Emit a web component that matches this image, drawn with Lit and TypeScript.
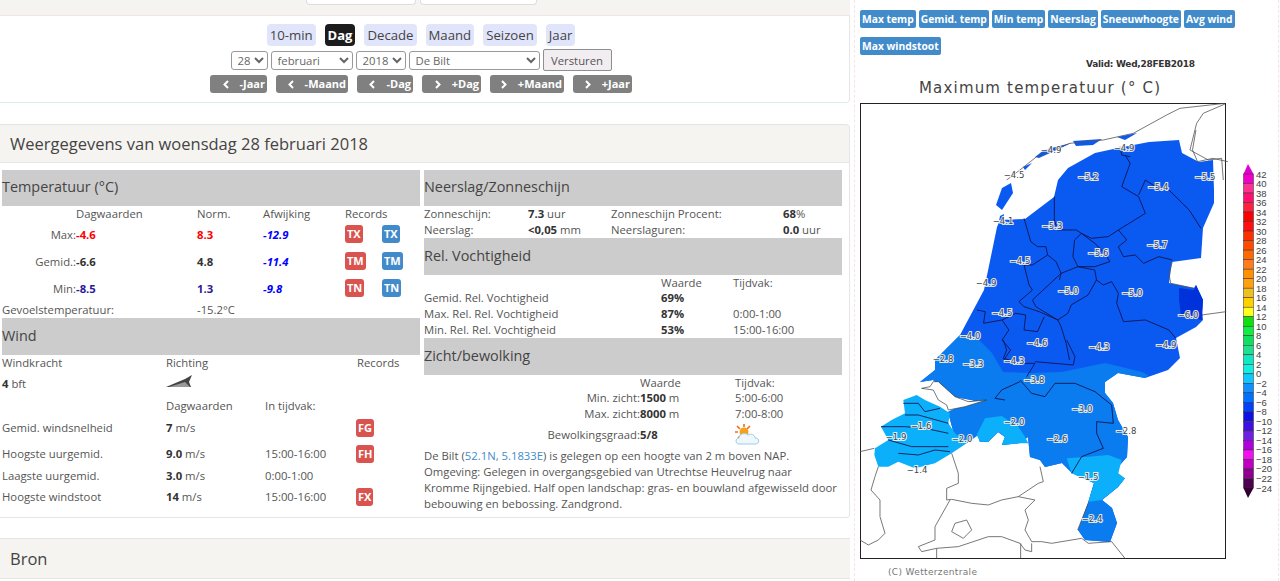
import { LitElement, html, css, svg } from "lit";
import { customElement } from "lit/decorators.js";

const Z8 = "translate(960 130) scale(0.337 0.3333)";
const Z9 = "translate(855 340) scale(0.3333)";
const Z7 = "translate(850 0) scale(0.3333)";

const LABELS: [string, number, number][] = [
  ["−4.9", 1051, 150], ["−4.9", 1124, 148], ["−4.5", 1014, 175], ["−5.2", 1088, 177], ["−5.4", 1158, 187],
  ["−5.5", 1205, 177], ["−4.1", 1003, 221], ["−5.3", 1052, 226], ["−5.7", 1157, 245], ["−5.6", 1098, 253],
  ["−4.5", 1020, 261], ["−4.9", 986, 283], ["−5.0", 1068, 291], ["−5.0", 1132, 293], ["−4.5", 1002, 313],
  ["−6.0", 1188, 315], ["−4.0", 970, 336], ["−4.6", 1037, 343], ["−4.3", 1099, 347], ["−4.9", 1166, 345],
  ["−2.8", 943, 359], ["−3.3", 973, 364], ["−4.3", 1014, 361], ["−3.8", 1034, 380], ["−3.0", 1082, 409],
  ["−2.0", 1014, 422], ["−2.8", 1126, 431], ["−1.6", 921, 426], ["−1.9", 896, 437], ["−2.0", 962, 439],
  ["−2.6", 1057, 439], ["−1.5", 1088, 477], ["−1.4", 917, 470], ["−2.4", 1092, 519],
];

const BAR = ["#f000c8","#ff3090","#ff1070","#ff2040","#ff0000","#ff1010","#ff3000","#ff4a00","#ff6a00","#ff7a20","#ff9000","#ffa010","#f0c020","#ffd000","#ffff20","#10e010","#10ee40","#10e060","#20e090","#10e8c0","#10f0e0","#10c8ff","#1090ff","#0070ff","#0040ff","#1010e0","#4010e0","#7020e0","#b000e0","#f010f0","#c000c0","#900090","#500050"];

const MAIN = "1025,219 1054,197 1058,180 1068,168 1095,153 1118,148 1149,142 1179,140 1182,153 1199,162 1213,160 1214,190 1214,203 1203,228 1201,258 1172,262 1169,283 1194,288 1196,285 1203,300 1202,312 1203,320 1196,327 1176,338 1180,358 1168,370 1145,378 1118,373 1105,382 1105,393 1113,403 1118,420 1128,437 1127,457 1118,467 1115,480 1125,478 1118,487 1102,500 1112,508 1117,523 1110,542 1085,540 1078,530 1088,503 1094,483 1072,473 1062,463 1045,467 1040,460 1030,457 1028,437 1020,443 1002,445 1005,437 998,432 988,442 980,442 978,435 967,443 955,438 948,412 968,402 988,398 982,402 955,397 933,380 920,382 935,370 935,360 950,345 960,335 984,290 997,227 1000,220";
const MID = "960,335 977,338 992,353 1003,372 1032,373 1062,372 1105,363 1142,372 1148,375 1145,378 1118,373 1105,382 1105,393 1113,403 1118,420 1128,437 1127,457 1118,467 1115,480 1125,478 1118,487 1102,500 1112,508 1117,523 1110,542 1085,540 1078,530 1088,503 1094,483 1072,473 1062,463 1045,467 1040,460 1030,457 1028,437 1020,443 1002,445 1005,437 998,432 988,442 980,442 978,435 967,443 955,438 948,412 968,402 988,398 982,402 955,397 933,380 920,382 935,370 935,360 950,345";
const LIGHT = [
  "60,325 100,300 78,260 110,240 150,220 145,180 185,165 210,180 255,200 285,220 280,250 300,280 335,310 290,340 240,370 180,385 130,365 100,380 70,380 58,345",
  "365,285 390,235 440,228 490,260 510,290 520,310 495,310 440,315 450,290 430,275 400,305 375,305",
  "635,355 700,350 760,345 800,360 790,400 810,415 790,440 740,480 700,485 718,430 650,400",
];
const ISLANDS = ["1011,183 1013,193 1002,210 996,205 1002,188", "1035,157 1044,150 1071,143 1061,148 1039,158", "1073,141 1102,139 1093,145 1076,146", "1117,137 1137,133 1125,140", "1023,167 1032,163 1025,170", "1000,216 1004,214 1003,221 999,221"];

const LINES_Z8 = [
  "490,75 505,100 480,170 530,200 550,250 510,275 470,300 440,320 390,325 360,310 345,300 290,300 280,270 280,200",
  "530,195 550,150 580,170 620,180 680,240 715,295",
  "470,300 495,330 470,350 485,380 520,375 545,400 590,380 630,390",
  "360,310 340,330 335,380 350,410 400,410 445,395 430,370 400,340 360,310",
  "190,265 210,335 230,350 255,350 260,375 215,405 190,405",
  "260,375 285,395 300,430 295,450",
  "350,410 300,430 215,510 225,530 290,570 320,550 330,525 380,495 405,450 400,420 350,410",
  "405,450 425,465 450,455 470,490 465,520 485,575 550,570 620,600 640,625",
  "190,405 205,465 215,480 175,515 190,530 235,545 290,570 300,590 315,640 325,690",
  "50,540 75,545 70,580 125,570 165,550 195,555 190,600 230,605 250,560",
  "125,570 145,600 125,630 150,660 130,690",
  "475,50 480,75 505,80",
];
const LINES_Z9 = [
  "445,0 455,30 445,55 500,70 540,70 515,110",
  "540,65 655,75 660,50 635,0",
  "495,120 530,160 570,170 600,130 660,130 720,155 770,195 775,250 725,245 725,280 745,325 680,350 650,400",
  "495,125 440,150 420,175 450,180",
  "145,190 190,190 210,215 255,205",
  "150,225 190,225 280,250",
  "78,260 150,260 210,265 280,280",
  "100,300 170,320 230,320 280,320",
  "130,340 190,345 240,330 285,335",
];
const GREY_Z9 = [
  "15,335 58,325",
  "70,380 60,410 48,450 75,480 75,530 90,580 70,600 40,615 15,600",
  "290,340 310,400 310,430 275,445 275,480 290,478 350,490 400,495 440,480 490,470 550,430 565,425 555,380",
  "490,470 540,480 510,510 520,540 510,570 530,605 560,605 590,610 680,595",
  "285,480 240,560 240,600 190,620 200,635 245,625 310,620 400,590 440,590 495,610 510,630 530,635 530,610",
  "300,550 335,540 350,570 325,595 290,575 300,550",
  "680,595 700,610 770,605 810,655",
  "245,625 245,655", "497,610 497,655",
  "668,570 700,490",
];
const GREY_Z7 = [
  "470,540 510,510 560,470 660,430 760,420 850,400 950,345 990,325 1125,310",
  "1125,312 1060,340 1040,370 1020,450 1075,480 1115,475 1120,540",
];

function poly(p: string, cls: string) {
  return svg`<polyline class=${cls} points=${p}></polyline>`;
}

@customElement("app-root")
export class AppRoot extends LitElement {
  static styles = css`
    :host { display: block; height: 581px; overflow: hidden; background: #fff; font-family: "Open Sans", sans-serif; font-size: 11.3px; color: #555; }
    * { box-sizing: border-box; }
    .page { display: flex; height: 581px; }
    .left { width: 850px; flex: none; }
    .stub { height: 16px; background: #f6f4f1; border-bottom: 1px solid #f0e6ea; display: flex; gap: 4px; padding-left: 306px; align-items: flex-start; }
    .stub span { height: 5px; background: #fff; border: 1px solid #ddd; border-top: 0; border-radius: 0 0 4px 4px; }
    .s1 { width: 110px; } .s2 { width: 117px; }
    .nav { height: 87px; border-bottom: 1px solid #e0ece8; border-right: 1px solid #e6e6e6; border-radius: 0 0 4px 0; padding: 8px 7px 0 0; display: flex; flex-direction: column; align-items: center; }
    .tabs { display: flex; gap: 9px; height: 22px; }
    .tab { padding: 0 3px; background: #e1e5fb; border-radius: 4px; font-size: 13.2px; line-height: 23px; color: #444; }
    .tab.on { background: #1c1c1c; color: #fff; font-weight: 700; font-size: 13px; }
    .form { display: flex; gap: 3px; align-items: center; height: 22px; margin-top: 3px; }
    select { height: 19px; font: 11.3px "Open Sans", sans-serif; color: #666; background: #fff; border: 1px solid #999; border-radius: 3px; padding: 0 0 0 2px; }
    .go { height: 22px; width: 69px; font: 11.3px "Open Sans", sans-serif; color: #555; background: #f1edf0; border: 1px solid #8f8f8f; border-radius: 2px; padding: 0; }
    .steps { display: flex; gap: 9px; margin-top: 4px; }
    .step { height: 18px; background: #808080; color: #fff; border-radius: 3px; font-weight: 700; font-size: 11px; line-height: 18px; display: flex; align-items: center; justify-content: flex-end; padding-right: 2px; }
    .step svg { margin-right: 11px; }
    .card { margin-top: 21px; border-right: 1px solid #e6e6e6; border-bottom: 1px solid #dfe6e4; border-radius: 0 4px 4px 0; }
    .head { height: 39px; background: #f6f4f1; border-top: 1px solid #e4e4e4; border-bottom: 1px solid #e6e6e6; border-radius: 0 4px 0 0; padding-left: 10px; font-size: 16.5px; line-height: 38px; color: #444; }
    .body { display: grid; grid-template-columns: 418px 418px; gap: 4px; padding: 7px 0 0 2px; height: 354px; }
    .band { background: #cccccc; height: 36px; font-size: 14.4px; line-height: 34px; color: #444; }
    .band.t { height: 37px; line-height: 35px; }
    .temp { display: grid; grid-template-columns: 195px 66px 82px 37px 1fr; grid-template-rows: 16px 26px 28px 26px 16px; align-items: center; }
    .lab { display: inline-block; width: 74px; text-align: right; }
    .pl { padding-left: 74px; }
    b { font-weight: 700; color: #333; }
    .red { color: #f00; } .navy { color: #2a1a9a; } 
    .dev { color: #00f; font-weight: 700; font-style: italic; }
    .badge { display: inline-block; height: 18px; padding: 0 2px; border-radius: 3px; background: #d9534f; color: #fff; font-weight: 700; font-size: 11px; line-height: 18px; }
    .badge.blue { background: #428bca; }
    .wind { display: grid; grid-template-columns: 164px 99px 91px 1fr; grid-template-rows: 17px 24px 20px 25px 27px 17px 25px; align-items: center; }
    .rec { padding-left: 1px; }
    .zon { display: grid; grid-template-columns: 104px 83px 172px 1fr; grid-template-rows: 16px 16px; height: 32px; align-items: center; }
    .rel { display: grid; grid-template-columns: 237px 72px 1fr; grid-template-rows: 16px 15px 16px 16px; align-items: center; }
    .zicht { display: grid; grid-template-columns: 216px 95px 1fr; grid-template-rows: 16px 15px 16px 26px; align-items: center; }
    .temp > *, .wind > *, .zon > *, .rel > *, .zicht > * { margin-bottom: 2px; }
    .r { text-align: right; }
    .para { margin: 0; line-height: 16px; white-space: nowrap; }
    a { color: #428bca; text-decoration: none; }
    .bron { margin-top: 20px; height: 41px; background: #f6f4f1; border-top: 1px solid #e4e4e4; border-bottom: 1px solid #dfe6e4; padding-left: 10px; font-size: 16.5px; line-height: 39px; color: #444; }
    .right { width: 425px; margin-left: 4px; flex: none; border-left: 1px dashed #f4e4ea; border-right: 1px dashed #f4e4ea; }
    .maps { display: flex; flex-wrap: wrap; gap: 9px 3px; padding: 10px 0 0 5px; height: 56px; align-content: flex-start; }
    .map-btn { height: 18px; padding: 0 2px; background: #428bca; color: #fff; border-radius: 2px; font-weight: 700; font-size: 10.3px; line-height: 18px; white-space: nowrap; }
    svg.map { display: block; width: 423px; height: 525px; }
    .land { stroke: none; }
    .prov { fill: none; stroke: #10104a; stroke-width: 2.6; }
    .grey { fill: none; stroke: #555; stroke-width: 2.4; }
    .val { font: 8.5px "DejaVu Sans", sans-serif; fill: #444; text-anchor: middle; stroke: #fff; stroke-width: 2px; stroke-opacity: .85; paint-order: stroke; }
    .tick { font: 9.5px "Liberation Sans", sans-serif; fill: #444; }
    .title { font: 15px "DejaVu Sans", sans-serif; fill: #444; }
    .valid { font: bold 9px "DejaVu Sans", sans-serif; fill: #333; }
    .copy { font: 9px "DejaVu Sans", sans-serif; fill: #777; }
  `;

  private chev(left: boolean) {
    return html`<svg width="6" height="9" viewBox="0 0 6 9"><path d=${left ? "M5 1 1.5 4.5 5 8" : "M1 1 4.5 4.5 1 8"} fill="none" stroke="#fff" stroke-width="2"></path></svg>`;
  }

  private map() {
    const top = 174;
    const step = 314 / 33;
    return html`<svg class="map" viewBox="855 56 423 525">
      <text class="valid" x="1086" y="67" textLength="109">Valid:  Wed,28FEB2018</text>
      <text class="title" x="919" y="93" textLength="241">Maximum temperatuur (° C)</text>
      <rect x="860.5" y="103.5" width="365" height="455" fill="#fff" stroke="#222"></rect>
      <polygon class="land" points=${MAIN} fill="#0a5af2"></polygon>
      ${ISLANDS.map((p) => svg`<polygon class="land" points=${p} fill="#0a5af2"></polygon>`)}
      <polygon class="land" points=${MID} fill="#0a7cf0"></polygon>
      <polygon class="land" points="1179,288 1194,290 1196,285 1203,300 1202,320 1181,315 1179,300" fill="#0032dc"></polygon>
      <g transform=${Z9}>
        ${LIGHT.map((p) => svg`<polygon class="land" points=${p} fill="#0cb0fa"></polygon>`)}
        <polygon points="200,145 235,150 250,180 275,195 280,210 330,200 395,180 340,185 300,170 250,125 235,125 225,140" fill="#fff" stroke="#333" stroke-width="2"></polygon>
        ${GREY_Z9.map((p) => poly(p, "grey"))}
        ${LINES_Z9.map((p) => poly(p, "prov"))}
      </g>
      <g transform=${Z7}>${GREY_Z7.map((p) => poly(p, "grey"))}</g>
      <g transform=${Z8}>
        ${LINES_Z8.map((p) => poly(p, "prov"))}
        ${poly("700,0 690,60 705,95 750,85 795,95", "grey")}
        ${poly("718,555 790,545", "grey")}
        ${poly("630,395 620,430 625,460 695,475", "grey")}
      </g>
      ${LABELS.map(([t, x, y]) => svg`<text class="val" x=${x} y=${y + 3}>${t}</text>`)}
      <polygon points="1248,164 1243.5,174 1253.5,174" fill="#e000d0"></polygon>
      ${BAR.map((c, i) => svg`<rect x="1243.5" y=${top + i * step} width="10" height=${step} fill=${c} stroke="#333" stroke-width="0.5"></rect>`)}
      <polygon points="1243.5,488 1253.5,488 1248,498" fill="#300030"></polygon>
      ${BAR.concat(["x"]).map((_, i) => {
        const v = 42 - i * 2;
        return svg`<text class="tick" x="1256" y=${top + i * step + 3.5}>${v < 0 ? "−" + -v : v}</text>`;
      })}
      <text class="copy" x="888" y="575" textLength="89">(C) Wetterzentrale</text>
    </svg>`;
  }

  render() {
    const steps: [string, number, boolean][] = [["-Jaar", 57, true], ["-Maand", 72, true], ["-Dag", 56, true], ["+Dag", 59, false], ["+Maand", 74, false], ["+Jaar", 59, false]];
    const maps = ["Max temp", "Gemid. temp", "Min temp", "Neerslag", "Sneeuwhoogte", "Avg wind", "Max windstoot"];
    return html`<div class="page">
      <div class="left">
        <div class="stub"><span class="s1"></span><span class="s2"></span></div>
        <div class="nav">
          <div class="tabs">
            ${["10-min", "Dag", "Decade", "Maand", "Seizoen", "Jaar"].map((t) => html`<span class="tab ${t === "Dag" ? "on" : ""}">${t}</span>`)}
          </div>
          <div class="form">
            <select style="width:37px"><option>28</option></select>
            <select style="width:82px"><option>februari</option></select>
            <select style="width:50px"><option>2018</option></select>
            <select style="width:131px"><option>De Bilt</option></select>
            <button class="go">Versturen</button>
          </div>
          <div class="steps">
            ${steps.map(([t, w, l]) => html`<span class="step" style="width:${w}px">${this.chev(l)}${t}</span>`)}
          </div>
        </div>
        <div class="card">
          <div class="head">Weergegevens van woensdag 28 februari 2018</div>
          <div class="body">
            <div>
              <div class="band">Temperatuur (°C)</div>
              <div class="temp">
                <span class="pl">Dagwaarden</span><span>Norm.</span><span>Afwijking</span><span>Records</span><span></span>
                <span><span class="lab">Max:</span><b class="red">-4.6</b></span><b class="red">8.3</b><span class="dev">-12.9</span><span><span class="badge">TX</span></span><span><span class="badge blue">TX</span></span>
                <span><span class="lab">Gemid.:</span><b>-6.6</b></span><b>4.8</b><span class="dev">-11.4</span><span><span class="badge">TM</span></span><span><span class="badge blue">TM</span></span>
                <span><span class="lab">Min:</span><b class="navy">-8.5</b></span><b class="navy">1.3</b><span class="dev">-9.8</span><span><span class="badge">TN</span></span><span><span class="badge blue">TN</span></span>
                <span>Gevoelstemperatuur:</span><span>-15.2°C</span><span></span><span></span><span></span>
              </div>
              <div class="band t">Wind</div>
              <div class="wind">
                <span>Windkracht</span><span>Richting</span><span></span><span class="rec">Records</span>
                <span><b>4</b> bft</span>
                <span><svg width="27" height="13" viewBox="0 0 27 13"><path d="M0 12 19 4 26 0 23 7 25 12 Z" fill="#444"></path><path d="M3 12 19 7 24 12Z" fill="#999"></path></svg></span><span></span><span></span>
                <span></span><span>Dagwaarden</span><span>In tijdvak:</span><span></span>
                <span>Gemid. windsnelheid</span><span><b>7</b> m/s</span><span></span><span><span class="badge">FG</span></span>
                <span>Hoogste uurgemid.</span><span><b>9.0</b> m/s</span><span>15:00-16:00</span><span><span class="badge">FH</span></span>
                <span>Laagste uurgemid.</span><span><b>3.0</b> m/s</span><span>0:00-1:00</span><span></span>
                <span>Hoogste windstoot</span><span><b>14</b> m/s</span><span>15:00-16:00</span><span><span class="badge">FX</span></span>
              </div>
            </div>
            <div>
              <div class="band">Neerslag/Zonneschijn</div>
              <div class="zon">
                <span>Zonneschijn:</span><span><b>7.3</b> uur</span><span>Zonneschijn Procent:</span><span><b>68</b>%</span>
                <span>Neerslag:</span><span><b>&lt;0,05</b> mm</span><span>Neerslaguren:</span><span><b>0.0</b> uur</span>
              </div>
              <div class="band t">Rel. Vochtigheid</div>
              <div class="rel">
                <span></span><span>Waarde</span><span>Tijdvak:</span>
                <span>Gemid. Rel. Vochtigheid</span><b>69%</b><span></span>
                <span>Max. Rel. Rel. Vochtigheid</span><b>87%</b><span>0:00-1:00</span>
                <span>Min. Rel. Rel. Vochtigheid</span><b>53%</b><span>15:00-16:00</span>
              </div>
              <div class="band t">Zicht/bewolking</div>
              <div class="zicht">
                <span></span><span>Waarde</span><span>Tijdvak:</span>
                <span class="r">Min. zicht:</span><span><b>1500</b> m</span><span>5:00-6:00</span>
                <span class="r">Max. zicht:</span><span><b>8000</b> m</span><span>7:00-8:00</span>
                <span class="r">Bewolkingsgraad:</span><b>5/8</b>
                <span><svg width="25" height="21" viewBox="0 0 25 21" style="display:block">
                  <circle cx="9" cy="8" r="4.5" fill="#f7a11a"></circle>
                  <path d="M9 0v3M2 2l3 3M0 8h3M15 2l-3 3M3 14l2-2" stroke="#f26c1a" stroke-width="1.6"></path>
                  <path d="M4 20c-4 0-4-6 0-6 0-4 6-6 9-3 3-2 7 0 7 3 5 0 5 6 0 6Z" fill="#eef7fc" stroke="#9fcbe4"></path>
                </svg></span>
              </div>
              <div class="para">
                <div>De Bilt (<a>52.1N, 5.1833E</a>) is gelegen op een hoogte van 2 m boven NAP.</div>
                <div>Omgeving: Gelegen in overgangsgebied van Utrechtse Heuvelrug naar</div>
                <div>Kromme Rijngebied. Half open landschap: gras- en bouwland afgewisseld door</div>
                <div>bebouwing en bebossing. Zandgrond.</div>
              </div>
            </div>
          </div>
        </div>
        <div class="bron">Bron</div>
      </div>
      <div class="right">
        <div class="maps">${maps.map((m) => html`<span class="map-btn">${m}</span>`)}</div>
        ${this.map()}
      </div>
    </div>`;
  }
}
